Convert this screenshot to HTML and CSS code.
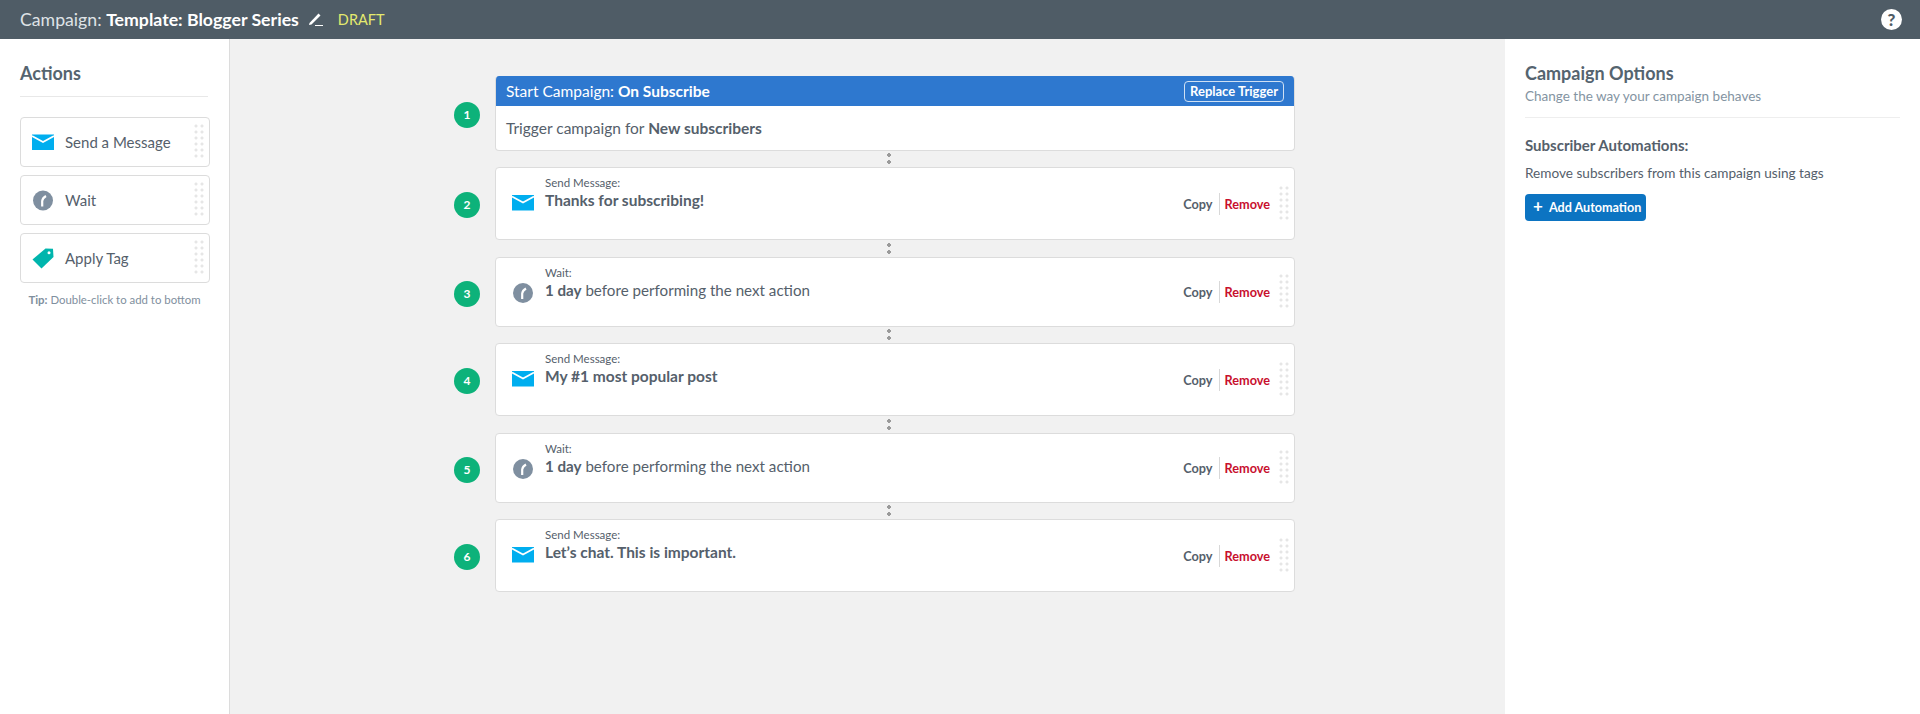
FILE: index.html
```html
<!DOCTYPE html>
<html lang="en">
<head>
<meta charset="utf-8">
<title>Campaign: Template: Blogger Series</title>
<link rel="stylesheet" href="styles.css">
</head>
<body>
<svg class="defs" width="0" height="0" aria-hidden="true">
  <symbol id="env" viewBox="0 0 22 16"><rect width="22" height="15.5" fill="#00aeef"/><path d="M0 1.5 11 7.5 22 1.5" fill="none" stroke="#fff" stroke-width="1.8"/></symbol>
  <symbol id="clock" viewBox="0 0 20 20"><circle cx="10" cy="10" r="10" fill="#7f8fa0"/><path d="M9.2 16V10.5Q9.5 7.5 13 5.5" fill="none" stroke="#fff" stroke-width="2.2"/></symbol>
  <symbol id="tag" viewBox="0 0 22 21"><path d="M13.5 0.5 21 0.8 21.5 9 9.5 20.5 0.5 11.5Z" fill="#00b5ad"/><circle cx="17" cy="4.8" r="1.5" fill="#fff"/></symbol>
</svg>
<header class="topbar">
  <div class="title"><span class="title-text"><span class="title-label">Campaign:</span> <strong>Template: Blogger Series</strong></span>
    <svg class="pencil" viewBox="0 0 15 15" width="15" height="15"><path d="M1.5 11 10.5 1.5 12.5 3.5 3.5 12.5 1 13Z" fill="#fff"/><rect x="7" y="13" width="8" height="1" fill="#fff"/></svg>
    <span class="draft">DRAFT</span>
  </div>
  <div class="help">?</div>
</header>
<main class="layout">
  <aside class="actions">
    <h2 class="panel-title">Actions</h2>
    <ul class="action-list">
      <li class="action"><svg class="action-icon"><use href="#env"/></svg><span>Send a Message</span><i class="grip"></i></li>
      <li class="action"><svg class="action-icon clock-icon"><use href="#clock"/></svg><span>Wait</span><i class="grip"></i></li>
      <li class="action"><svg class="action-icon"><use href="#tag"/></svg><span>Apply Tag</span><i class="grip"></i></li>
    </ul>
    <p class="tip"><b>Tip:</b> Double-click to add to bottom</p>
  </aside>
  <section class="canvas">
    <div class="flow">
      <div class="step trigger-step">
        <div class="num">1</div>
        <div class="card trigger">
          <div class="trigger-head"><span>Start Campaign: <b>On Subscribe</b></span><span class="replace">Replace Trigger</span></div>
          <div class="trigger-body">Trigger campaign for <b>New subscribers</b></div>
        </div>
      </div>
      <div class="link link-a"></div>
      <div class="step">
        <div class="num">2</div>
        <div class="card tall">
          <svg class="step-icon"><use href="#env"/></svg>
          <div class="info"><small>Send Message:</small><b>Thanks for subscribing!</b></div>
          <div class="ops"><span class="copy">Copy</span><span class="remove">Remove</span></div><i class="grip"></i>
        </div>
      </div>
      <div class="link link-b"></div>
      <div class="step">
        <div class="num">3</div>
        <div class="card short">
          <svg class="step-icon clock-step"><use href="#clock"/></svg>
          <div class="info"><small>Wait:</small><span><b>1 day</b> before performing the next action</span></div>
          <div class="ops"><span class="copy">Copy</span><span class="remove">Remove</span></div><i class="grip"></i>
        </div>
      </div>
      <div class="link link-a"></div>
      <div class="step">
        <div class="num">4</div>
        <div class="card tall">
          <svg class="step-icon"><use href="#env"/></svg>
          <div class="info"><small>Send Message:</small><b>My #1 most popular post</b></div>
          <div class="ops"><span class="copy">Copy</span><span class="remove">Remove</span></div><i class="grip"></i>
        </div>
      </div>
      <div class="link link-b"></div>
      <div class="step">
        <div class="num">5</div>
        <div class="card short">
          <svg class="step-icon clock-step"><use href="#clock"/></svg>
          <div class="info"><small>Wait:</small><span><b>1 day</b> before performing the next action</span></div>
          <div class="ops"><span class="copy">Copy</span><span class="remove">Remove</span></div><i class="grip"></i>
        </div>
      </div>
      <div class="link link-a"></div>
      <div class="step">
        <div class="num">6</div>
        <div class="card tall">
          <svg class="step-icon"><use href="#env"/></svg>
          <div class="info"><small>Send Message:</small><b>Let’s chat. This is important.</b></div>
          <div class="ops"><span class="copy">Copy</span><span class="remove">Remove</span></div><i class="grip"></i>
        </div>
      </div>
    </div>
  </section>
  <aside class="options">
    <h2 class="panel-title">Campaign Options</h2>
    <p class="sub">Change the way your campaign behaves</p>
    <h3 class="auto-title">Subscriber Automations:</h3>
    <p class="auto-text">Remove subscribers from this campaign using tags</p>
    <button class="add" type="button"><span class="plus">+</span>Add Automation</button>
  </aside>
</main>
</body>
</html>
```
FILE: styles.css
```css
* { box-sizing: border-box; }
html, body { margin: 0; height: 100%; overflow: hidden; }
body { font-family: "Lato", "Noto Sans", sans-serif; color: #55606b; background: #fff; font-size: 15px; }
.defs { position: absolute; }
b, strong { font-weight: 700; }

.topbar { height: 39px; background: #4f5c66; display: flex; align-items: center; justify-content: space-between; padding: 0 18px 0 20px; }
.title { display: flex; align-items: center; font-size: 17.7px; color: #fff; white-space: pre; }
.title-label { color: #dfe3e6; }
.pencil { margin: 0 0 0 9px; }
.draft { color: #e4ea6e; font-size: 14.5px; margin-left: 15px; }
.help { width: 21px; height: 21px; border-radius: 50%; background: #fff; color: #4f5c66; font-weight: 900; font-size: 17px; line-height: 21px; text-align: center; }

.layout { display: grid; grid-template-columns: 230px 1fr 415px; height: 675px; }
.actions { border-right: 1px solid #dcdcdc; padding: 23px 20px 0; }
.panel-title { margin: 0; font-size: 18px; line-height: 22px; font-weight: 700; color: #55646f; }
.actions .panel-title { padding-bottom: 12px; border-bottom: 1px solid #e8e8e8; margin-right: 1px; }
.action-list { list-style: none; margin: 20px 0 0; padding: 0; display: flex; flex-direction: column; gap: 8px; }
.action { height: 50px; width: 190px; border: 1px solid #dcdcdc; border-radius: 4px; display: flex; align-items: center; padding-left: 11px; font-size: 15px; position: relative; }
.action-icon { width: 22px; height: 21px; margin-right: 11px; flex: none; }
.clock-icon { width: 20px; margin: 0 12px 0 1px; }
.tip { margin: 9px 0 0; text-align: center; font-size: 11.4px; color: #7f8f9e; line-height: 16px; }

.grip { position: absolute; right: 3px; top: 50%; width: 12px; height: 36px; margin-top: -18px;
  background-image: radial-gradient(circle at 2px 2px, #e6e6e6 1.4px, transparent 1.7px); background-size: 6px 6px; }

.canvas { background: #f1f1f1; padding-top: 37px; }
.flow { width: 841px; margin-left: 224px; }
.step { display: flex; align-items: center; }
.num { width: 26px; height: 26px; border-radius: 50%; background: #0db27a; color: #fff; font-size: 12px; font-weight: 700; text-align: center; line-height: 26px; flex: none; margin: 3px 15px 0 0; }
.card { flex: 1; background: #fff; border: 1px solid #dcdcdc; border-radius: 4px; position: relative; display: flex; }
.trigger { height: 75px; flex-direction: column; border-top: 0; overflow: hidden; }
.trigger-head { height: 30px; background: #2e78cf; color: #fff; display: flex; justify-content: space-between; align-items: center; padding: 0 10px 0 10px; font-size: 15.5px; }
.replace { border: 1px solid #cfe0f3; border-radius: 4px; font-size: 13px; font-weight: 700; height: 21px; line-height: 18px; padding: 0 5px; }
.trigger-body { padding: 0 10px; line-height: 44px; font-size: 15.5px; }
.tall { height: 73px; }
.short { height: 70px; }
.link { position: relative; }
.link-a { height: 16px; }
.link-b { height: 17px; }
.link::after { content: ""; position: absolute; left: 433px; top: 50%; width: 4px; height: 11px; margin-top: -6px;
  background-image: radial-gradient(circle at 2px 2px, #9a9a9a 1.8px, transparent 2px); background-size: 4px 7px; }
.step-icon { width: 22px; height: 16px; flex: none; margin: 27px 11px 0 16px; }
.clock-step { width: 20px; height: 20px; margin: 25px 12px 0 17px; }
.info { display: flex; flex-direction: column; padding-top: 8px; font-size: 15.5px; line-height: 20px; flex: 1; min-width: 0; }
.info > span { font-size: 15.15px; }
.info small { font-size: 11.5px; line-height: 14px; }
.ops { position: absolute; top: 50%; margin-top: -11px; right: 24px; height: 22px; display: flex; align-items: center; font-size: 12.7px; font-weight: 700; }
.copy { padding-right: 6px; border-right: 1px solid #d8d8d8; line-height: 22px; }
.remove { padding-left: 5px; color: #c8102e; line-height: 22px; }

.options { padding: 23px 20px 0; }
.sub { margin: 2px 0 0; font-size: 13.5px; line-height: 20px; color: #8494a2; padding-bottom: 11px; border-bottom: 1px solid #eee; }
.auto-title { margin: 17px 0 0; font-size: 15px; line-height: 20px; font-weight: 700; }
.auto-text { margin: 8px 0 0; font-size: 13.6px; line-height: 20px; }
.add { margin-top: 11px; height: 27px; width: 121px; border: 0; border-radius: 4px; background: #0c74c2; color: #fff; font: 700 12.6px "Lato", "Noto Sans", sans-serif; padding: 0 0 0 8px; display: flex; align-items: center; }
.plus { font-size: 17px; margin-right: 6px; line-height: 20px; margin-top: -4px; }
```
